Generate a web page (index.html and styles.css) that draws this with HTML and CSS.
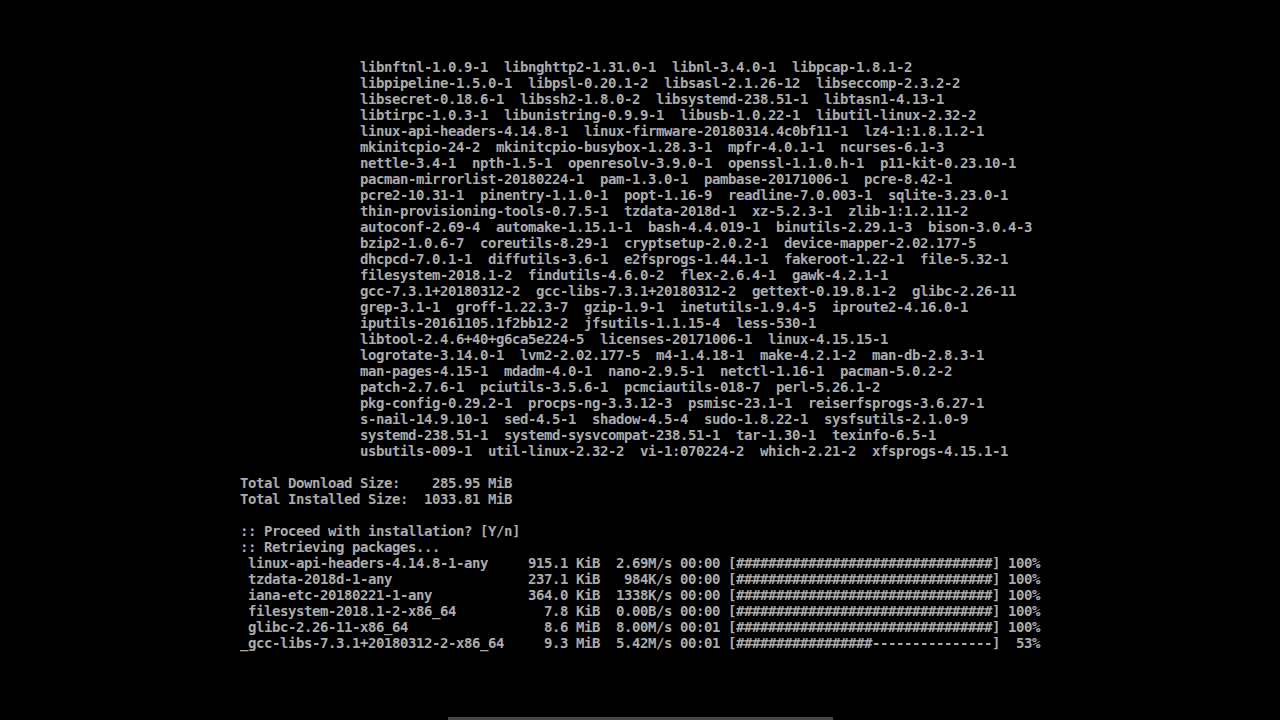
FILE: index.html
```html
<!DOCTYPE html>
<html>
<head>
    <title>
        pacstrap
    </title>
    <link rel="stylesheet" href="styles.css">
</head>
<body>
    <div class="screen">
<pre class="term">               libnftnl-1.0.9-1  libnghttp2-1.31.0-1  libnl-3.4.0-1  libpcap-1.8.1-2
               libpipeline-1.5.0-1  libpsl-0.20.1-2  libsasl-2.1.26-12  libseccomp-2.3.2-2
               libsecret-0.18.6-1  libssh2-1.8.0-2  libsystemd-238.51-1  libtasn1-4.13-1
               libtirpc-1.0.3-1  libunistring-0.9.9-1  libusb-1.0.22-1  libutil-linux-2.32-2
               linux-api-headers-4.14.8-1  linux-firmware-20180314.4c0bf11-1  lz4-1:1.8.1.2-1
               mkinitcpio-24-2  mkinitcpio-busybox-1.28.3-1  mpfr-4.0.1-1  ncurses-6.1-3
               nettle-3.4-1  npth-1.5-1  openresolv-3.9.0-1  openssl-1.1.0.h-1  p11-kit-0.23.10-1
               pacman-mirrorlist-20180224-1  pam-1.3.0-1  pambase-20171006-1  pcre-8.42-1
               pcre2-10.31-1  pinentry-1.1.0-1  popt-1.16-9  readline-7.0.003-1  sqlite-3.23.0-1
               thin-provisioning-tools-0.7.5-1  tzdata-2018d-1  xz-5.2.3-1  zlib-1:1.2.11-2
               autoconf-2.69-4  automake-1.15.1-1  bash-4.4.019-1  binutils-2.29.1-3  bison-3.0.4-3
               bzip2-1.0.6-7  coreutils-8.29-1  cryptsetup-2.0.2-1  device-mapper-2.02.177-5
               dhcpcd-7.0.1-1  diffutils-3.6-1  e2fsprogs-1.44.1-1  fakeroot-1.22-1  file-5.32-1
               filesystem-2018.1-2  findutils-4.6.0-2  flex-2.6.4-1  gawk-4.2.1-1
               gcc-7.3.1+20180312-2  gcc-libs-7.3.1+20180312-2  gettext-0.19.8.1-2  glibc-2.26-11
               grep-3.1-1  groff-1.22.3-7  gzip-1.9-1  inetutils-1.9.4-5  iproute2-4.16.0-1
               iputils-20161105.1f2bb12-2  jfsutils-1.1.15-4  less-530-1
               libtool-2.4.6+40+g6ca5e224-5  licenses-20171006-1  linux-4.15.15-1
               logrotate-3.14.0-1  lvm2-2.02.177-5  m4-1.4.18-1  make-4.2.1-2  man-db-2.8.3-1
               man-pages-4.15-1  mdadm-4.0-1  nano-2.9.5-1  netctl-1.16-1  pacman-5.0.2-2
               patch-2.7.6-1  pciutils-3.5.6-1  pcmciautils-018-7  perl-5.26.1-2
               pkg-config-0.29.2-1  procps-ng-3.3.12-3  psmisc-23.1-1  reiserfsprogs-3.6.27-1
               s-nail-14.9.10-1  sed-4.5-1  shadow-4.5-4  sudo-1.8.22-1  sysfsutils-2.1.0-9
               systemd-238.51-1  systemd-sysvcompat-238.51-1  tar-1.30-1  texinfo-6.5-1
               usbutils-009-1  util-linux-2.32-2  vi-1:070224-2  which-2.21-2  xfsprogs-4.15.1-1

Total Download Size:    285.95 MiB
Total Installed Size:  1033.81 MiB

:: Proceed with installation? [Y/n]
:: Retrieving packages...
 linux-api-headers-4.14.8-1-any     915.1 KiB  2.69M/s 00:00 [################################] 100%
 tzdata-2018d-1-any                 237.1 KiB   984K/s 00:00 [################################] 100%
 iana-etc-20180221-1-any            364.0 KiB  1338K/s 00:00 [################################] 100%
 filesystem-2018.1-2-x86_64           7.8 KiB  0.00B/s 00:00 [################################] 100%
 glibc-2.26-11-x86_64                 8.6 MiB  8.00M/s 00:01 [################################] 100%
_gcc-libs-7.3.1+20180312-2-x86_64     9.3 MiB  5.42M/s 00:01 [#################---------------]  53%</pre>
    </div>
    <div class="scrub"></div>
</body>
</html>
```

FILE: styles.css
```css
html,
body {
    margin: 0;
    padding: 0;
    height: 100%;
    background-color: #000;
    overflow: hidden;
}

.screen {
    padding-top: 59px;
    padding-left: 240px;
}

.term {
    margin: 0;
    font-family: "DejaVu Sans Mono", "Liberation Mono", monospace;
    font-size: 14px;
    font-weight: bold;
    letter-spacing: -0.428px;
    line-height: 16px;
    color: #ababab;
}

.scrub {
    position: fixed;
    left: 448px;
    bottom: 0;
    width: 385px;
    height: 3px;
    background-color: #44444c;
}
```
